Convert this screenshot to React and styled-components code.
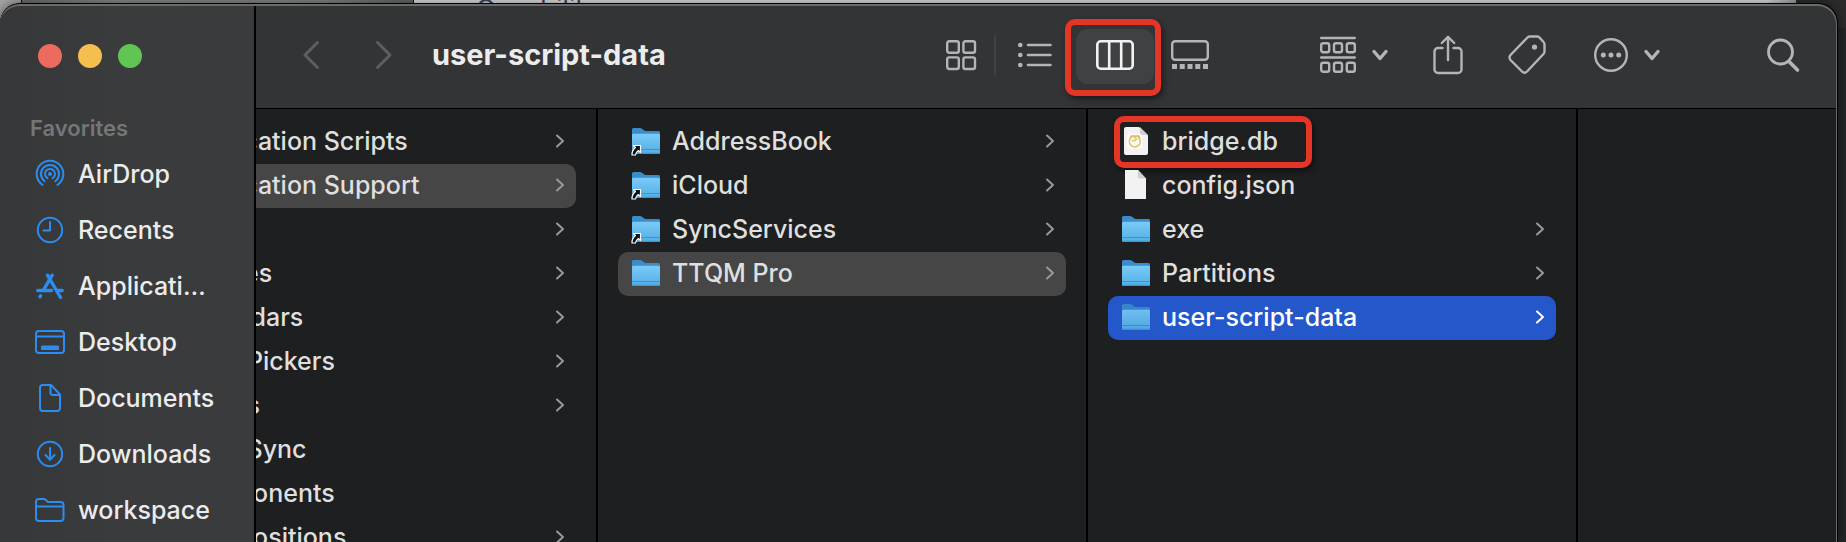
import React from "react";
import styled, { createGlobalStyle, css } from "styled-components";

const Global = createGlobalStyle`
  * { box-sizing: border-box; }
  html, body, #root { height: 100%; }
  body {
    margin: 0;
    overflow: hidden;
    background: #242526;
    font-family: Inter, "Liberation Sans", sans-serif;
  }
  button { border: 0; background: none; padding: 0; margin: 0; font: inherit; color: inherit; }
  svg { display: block; flex: none; overflow: visible; }
`;

const Page = styled.div`
  height: 100%;
  display: flex;
  flex-direction: column;
`;

const Backdrop = styled.div`
  flex: none;
  height: 28px;
  margin-bottom: -25px;
  display: flex;
  background: #2c2c2c;
`;

const BackdropLeft = styled.div`
  flex: none;
  width: 414px;
  background: linear-gradient(90deg, #a5a3a4 21px, #111 21px, #111 22px, #6e6e6e 22px, #8b8b8b 120px, #868686 320px, #666 413px, #111 413px);
`;

const BackdropSheet = styled.div`
  flex: 1;
  height: 28px;
  margin-right: 50px;
  padding-left: 62px;
  background: linear-gradient(90deg, #e0e1e4 calc(100% - 30px), #a0a0a0);
  color: #44465a;
  font-size: 26px;
  line-height: 18px;
`;

const Window = styled.main`
  position: relative;
  flex: 1;
  min-height: 0;
  margin-right: 8px;
  display: flex;
  overflow: hidden;
  border: solid #000;
  border-width: 1px 1px 0 0;
  border-radius: 20px 20px 0 0;
  background: #1e1f21;
  box-shadow: 0 0 12px rgba(0, 0, 0, 0.5);
  &::after {
    content: "";
    position: absolute;
    inset: 0;
    border: solid #6a6c6c;
    border-width: 2px 1px 0 0;
    border-radius: 20px 20px 0 0;
    pointer-events: none;
  }
`;

const Sidebar = styled.nav`
  flex: none;
  width: 256px;
  border-right: 2px solid #000;
  background: linear-gradient(90deg, #363738, #3a3b3c 110px);
`;

const Lights = styled.div`
  display: flex;
  gap: 16px;
  padding: 40px 0 0 38px;
`;

const Light = styled.button`
  width: 24px;
  height: 24px;
  border-radius: 50%;
  background: ${(p) => p.$color};
`;

const SectionTitle = styled.h2`
  margin: 48px 0 6px 30px;
  color: #757677;
  font-size: 22px;
  line-height: 24px;
  font-weight: 600;
`;

const SidebarLink = styled.a`
  display: flex;
  align-items: center;
  gap: 13px;
  height: 56px;
  padding: 0 36px 0 35px;
  color: #ececec;
  font-size: 25px;
  line-height: 32px;
  font-weight: 500;
  text-decoration: none;
  svg { color: #2b8df0; }
`;

const Label = styled.span`
  overflow: hidden;
  white-space: nowrap;
  text-overflow: ellipsis;
`;

const Main = styled.div`
  flex: 1;
  min-width: 0;
  display: flex;
  flex-direction: column;
`;

const Toolbar = styled.header`
  flex: none;
  display: flex;
  align-items: center;
  height: 105px;
  padding: 0 38px 2px 47px;
  border-bottom: 1px solid #000;
  background: #333436;
  color: #b4b5b6;
`;

const NavButtons = styled.div`
  display: flex;
  gap: 57px;
  color: #5d5e5f;
`;

const Title = styled.h1`
  margin: 0 0 0 40px;
  color: #ececec;
  font-size: 29px;
  line-height: 36px;
  font-weight: 700;
  white-space: nowrap;
`;

const Views = styled.div`
  display: flex;
  align-items: center;
  margin-left: auto;
`;

const Divider = styled.span`
  width: 2px;
  height: 40px;
  margin: 0 22px 0 18px;
  background: #404143;
`;

const marked = css`
  border: 6px solid #e63427;
  border-radius: 10px;
  box-shadow: 2px 3px 6px rgba(0, 0, 0, 0.5);
`;

const ActiveFrame = styled.div`
  ${marked}
  padding: 4px 1px 6px 5px;
  margin: 5px 10px 0 13px;
`;

const ActiveView = styled.button`
  display: grid;
  place-items: center;
  width: 78px;
  height: 55px;
  padding-bottom: 3px;
  border-radius: 12px;
  background: #404143;
  color: #f2f2f2;
`;

const Actions = styled.div`
  display: flex;
  align-items: center;
  margin-left: 111px;
`;

const Action = styled.button`
  display: flex;
  align-items: center;
  gap: 16px;
  margin-right: ${(p) => p.$after}px;
`;

const Columns = styled.div`
  flex: 1;
  min-height: 0;
  display: flex;
  overflow: hidden;
`;

const ColumnClip = styled.div`
  flex: none;
  width: ${(p) => (p.$partial ? 342 : 490)}px;
  display: flex;
  justify-content: flex-end;
  overflow: hidden;
  border-right: 2px solid #000;
`;

const Column = styled.ul`
  flex: none;
  width: 488px;
  margin: 0;
  padding: 11px 20px 0;
  list-style: none;
`;

const Row = styled.button`
  display: flex;
  align-items: center;
  gap: 12px;
  width: 100%;
  height: 44px;
  padding: 0 12px 2px 14px;
  border-radius: 10px;
  background: ${(p) => ({ active: "#2457c9", path: "#464646" })[p.$state] || "none"};
  color: ${(p) => (p.$state === "active" ? "#fff" : "#dfdfdf")};
  font-size: 25px;
  line-height: 32px;
  font-weight: 500;
  text-align: left;
  > svg:last-child { margin-left: auto; color: ${(p) => (p.$state === "active" ? "#fff" : "#98999a")}; }
`;

const Item = styled.li`
  position: relative;
`;

const Mark = styled.span`
  ${marked}
  position: absolute;
  top: -4px;
  left: 6px;
  width: 198px;
  height: 52px;
  pointer-events: none;
`;

const Line = ({ w, h, sw = 2, children }) => (
  <svg width={w} height={h} viewBox={`0 0 ${w} ${h}`} fill="none" stroke="currentColor" strokeWidth={sw} strokeLinecap="round" strokeLinejoin="round" aria-hidden="true">
    {children}
  </svg>
);

const sideIcons = {
  AirDrop: (
    <Line w={30} h={30}>
      <circle cx="15" cy="15" r="2" fill="currentColor" stroke="none" />
      <path d="M12.4 19.2a5 5 0 1 1 5.2 0M9.7 22.2a9 9 0 1 1 10.6 0M7.6 26a13.3 13.3 0 1 1 14.8 0" />
    </Line>
  ),
  Recents: (
    <Line w={30} h={30}>
      <circle cx="15" cy="15" r="12.2" />
      <path d="M15 7v8.5H8.5" />
    </Line>
  ),
  Applications: (
    <Line w={30} h={30} sw={3.4}>
      <path d="M12.5 4.2l13 22.3M17.2 4.2L9 18.2M5 25.8l.6-1M2.7 19.5h13.8M22 19.5h5.2" />
    </Line>
  ),
  Desktop: (
    <Line w={30} h={30}>
      <rect x="1" y="4" width="28" height="22" rx="3" />
      <path d="M1.5 9.5h27" strokeWidth="1.8" />
      <rect x="6" y="18.5" width="18" height="4.5" rx="1" fill="currentColor" stroke="none" />
    </Line>
  ),
  Documents: (
    <Line w={30} h={30}>
      <path d="M16 2H8a3 3 0 0 0-3 3v20a3 3 0 0 0 3 3h14a3 3 0 0 0 3-3V11.5zM15.5 2.2V9.5a2.5 2.5 0 0 0 2.5 2.5H25" />
    </Line>
  ),
  Downloads: (
    <Line w={30} h={30}>
      <circle cx="15" cy="15" r="12.2" />
      <path d="M15 9v11.5M10.5 16l4.5 4.7 4.5-4.7" />
    </Line>
  ),
  workspace: (
    <Line w={30} h={30}>
      <path d="M1 23V7a3 3 0 0 1 3-3h5.5l3.5 3h12.5a3 3 0 0 1 3 3v13a3 3 0 0 1-3 3H4a3 3 0 0 1-3-3zM1 11.5h27.5" />
    </Line>
  ),
};

const DownChevron = () => (
  <Line w={16} h={12} sw={3.4}><path d="M2 2.5l6 7 6-7" /></Line>
);

const Folder = ({ alias, dim }) => (
  <svg width="28" height="28" viewBox="0 0 28 28" aria-hidden="true">
    <defs>
      <linearGradient id="folderFront" x1="0" y1="0" x2="0" y2="1">
        <stop offset="0" stopColor="#7acbf8" />
        <stop offset="1" stopColor="#53ade5" />
      </linearGradient>
    </defs>
    <g opacity={dim ? 0.9 : 1}>
      <path d="M0 2.5Q0 1 1.5 1H8q1.2 0 2 .7L12 3.3q.8.7 2 .7h12.5q1.5 0 1.5 1.5V12H0z" fill="#3a8ccb" />
      <path d="M0 8Q0 6.7 1.5 6.7h25Q28 6.7 28 8v17.5q0 1.5-1.5 1.5h-25Q0 27 0 25.5z" fill="url(#folderFront)" />
      <path d="M0 22.5h28M.5 26.3h27" stroke="#3f93cc" strokeWidth="1" />
    </g>
    {alias && (
      <path d="M1.500 18.500h7v7l-2.200-2q-2.500 1.800-2.800 4.500H0q-.3-4.500 3.500-7.500z" fill="#111" stroke="#fff" strokeWidth="1.2" strokeLinejoin="round" />
    )}
  </svg>
);

const Paper = ({ badge }) => (
  <svg width="28" height="30" viewBox="0 0 28 30" aria-hidden="true">
    <path d={badge ? "M4 1h13l9 8.5V27q0 2-2 2H4q-2 0-2-2V3q0-2 2-2z" : "M3 0h13l8 8.5V29H3z"} fill="#f2f2f2" />
    <path d={badge ? "M18 1v5.5q0 2.5 2.5 2.5H26z" : "M16 0v6.5q0 2 2 2h6z"} fill="#cfcfcf" />
    {badge && (
      <g>
        <rect x="5" y="7.5" width="15" height="15" rx="3.5" fill="#fdfdfb" />
        <g fill="none" stroke="#e3c069" strokeWidth="1.5">
          <circle cx="12.8" cy="15.500" r="5.500" />
          <path d="M8.500 13q-.5-3 1.800-3.200t2.500 2.700q.5-3 3-2.800t1.500 3.300M9.500 14.500q3.500 1 5.500-2" />
        </g>
      </g>
    )}
  </svg>
);

const RowChevron = () => (
  <Line w={8} h={14}><path d="M1 1.500l6 5.500-6 5.500" /></Line>
);

const library = [
  ["Application Scripts", 1],
  ["Application Support", 1, "path"],
  ["Audio", 1],
  ["Caches", 1],
  ["Calendars", 1],
  ["ColorPickers", 1],
  ["Colors", 1],
  ["ColorSync", 0],
  ["Components", 0],
  ["Compositions", 1],
].map(([name, open, state]) => ({ name, open, state, kind: "folder" }));

const support = [
  { name: "AddressBook", kind: "alias", open: 1 },
  { name: "iCloud", kind: "alias", open: 1 },
  { name: "SyncServices", kind: "alias", open: 1 },
  { name: "TTQM Pro", kind: "folder", open: 1, state: "path" },
];

const project = [
  { name: "bridge.db", kind: "database", marked: true },
  { name: "config.json", kind: "paper" },
  { name: "exe", kind: "folder", open: 1 },
  { name: "Partitions", kind: "folder", open: 1 },
  { name: "user-script-data", kind: "folder", open: 1, state: "active" },
];

const FileIcon = ({ kind, dim }) =>
  kind === "paper" || kind === "database" ? <Paper badge={kind === "database"} /> : <Folder alias={kind === "alias"} dim={dim} />;

const FileColumn = ({ items, partial }) => (
  <ColumnClip $partial={partial}>
    <Column>
      {items.map((f) => (
        <Item key={f.name}>
          <Row $state={f.state}>
            <FileIcon kind={f.kind} dim={f.state === "active"} />
            <Label>{f.name}</Label>
            {f.open ? <RowChevron /> : null}
          </Row>
          {f.marked && <Mark />}
        </Item>
      ))}
    </Column>
  </ColumnClip>
);

export default function App() {
  return (
    <Page>
      <Global />
      <Backdrop>
        <BackdropLeft />
        <BackdropSheet>Capability</BackdropSheet>
      </Backdrop>
      <Window>
        <Sidebar>
          <Lights>
            <Light $color="#ed6a5f" aria-label="Close" />
            <Light $color="#f5bf4f" aria-label="Minimize" />
            <Light $color="#61c554" aria-label="Zoom" />
          </Lights>
          <SectionTitle>Favorites</SectionTitle>
          {Object.keys(sideIcons).map((name) => (
            <SidebarLink key={name} href="#">
              {sideIcons[name]}
              <Label>{name}</Label>
            </SidebarLink>
          ))}
        </Sidebar>
        <Main>
          <Toolbar>
            <NavButtons>
              <button aria-label="Back"><Line w={16} h={28} sw={3}><path d="M14.5 1.5L2 14l12.5 12.5" /></Line></button>
              <button aria-label="Forward"><Line w={16} h={28} sw={3}><path d="M1.5 1.5L14 14 1.5 26.5" /></Line></button>
            </NavButtons>
            <Title>user-script-data</Title>
            <Views>
              <button aria-label="Icons">
                <Line w={30} h={30} sw={2.4}>
                  <rect x="1.2" y="1.2" width="11.6" height="11.6" rx="2" />
                  <rect x="17.4" y="1.2" width="11.6" height="11.6" rx="2" />
                  <rect x="1.2" y="17.4" width="11.6" height="11.6" rx="2" />
                  <rect x="17.4" y="17.4" width="11.6" height="11.6" rx="2" />
                </Line>
              </button>
              <Divider />
              <button aria-label="List">
                <Line w={34} h={26} sw={2.6}>
                  <path d="M10 3h22.5M10 13h22.5M10 23h22.5" />
                  <g fill="currentColor" stroke="none"><circle cx="2.3" cy="3" r="2.3" /><circle cx="2.3" cy="13" r="2.3" /><circle cx="2.3" cy="23" r="2.3" /></g>
                </Line>
              </button>
              <ActiveFrame>
                <ActiveView aria-label="Columns">
                  <Line w={38} h={30} sw={2.6}>
                    <rect x="1.3" y="1.3" width="35.4" height="27.4" rx="3.5" />
                    <path d="M13.2 2v26M25.2 2v26" />
                  </Line>
                </ActiveView>
              </ActiveFrame>
              <button aria-label="Gallery">
                <Line w={38} h={30} sw={2.4}>
                  <rect x="1.2" y="1.2" width="35.6" height="18.6" rx="3" />
                  <path d="M1 26.5h36" strokeWidth="5" strokeLinecap="butt" strokeDasharray="5 2.75" />
                </Line>
              </button>
            </Views>
            <Actions>
              <Action $after={45} aria-label="Group">
                <Line w={36} h={38} sw={2.4}>
                  <path d="M1.2 2h33.6M1.2 21.500h33.6" />
                  <rect x="1.2" y="7.2" width="8" height="9" rx="2" /><rect x="14" y="7.2" width="8" height="9" rx="2" /><rect x="26.8" y="7.2" width="8" height="9" rx="2" />
                  <rect x="1.2" y="26.700" width="8" height="9" rx="2" /><rect x="14" y="26.700" width="8" height="9" rx="2" /><rect x="26.8" y="26.700" width="8" height="9" rx="2" />
                </Line>
                <DownChevron />
              </Action>
              <Action $after={45} aria-label="Share">
                <Line w={30} h={42} sw={2.4}>
                  <path d="M9.500 14H5A3.500 3.500 0 0 0 1.500 17.500v18A3.500 3.500 0 0 0 5 39h20a3.500 3.500 0 0 0 3.500-3.500v-18A3.500 3.500 0 0 0 25 14h-4.500M15 26V3M8.800 9L15 2.800 21.200 9" />
                </Line>
              </Action>
              <Action $after={48} aria-label="Tags">
                <Line w={38} h={40} sw={2.4}>
                  <path d="M19.5 2.5q1-1 2.5-1h7q1.500 0 2.5 1l4 4.500q1 1 1 2.500v7q0 1.500-1 2.500L19 36.500q-2.500 2.500-5 0L2.500 25q-2-2.500 0-5z" />
                  <circle cx="26.5" cy="12" r="2.6" fill="currentColor" stroke="none" />
                </Line>
              </Action>
              <Action $after={107} aria-label="More">
                <Line w={34} h={34} sw={2.4}>
                  <circle cx="17" cy="17" r="15.8" />
                  <g fill="currentColor" stroke="none"><circle cx="9.3" cy="17" r="2.5" /><circle cx="17" cy="17" r="2.5" /><circle cx="24.7" cy="17" r="2.5" /></g>
                </Line>
                <DownChevron />
              </Action>
              <Action $after={0} aria-label="Search">
                <Line w={32} h={34} sw={2.8}>
                  <circle cx="13.5" cy="14" r="12" />
                  <path d="M22 23.500l8.500 8.500" strokeWidth="3.6" />
                </Line>
              </Action>
            </Actions>
          </Toolbar>
          <Columns>
            <FileColumn items={library} partial />
            <FileColumn items={support} />
            <FileColumn items={project} />
          </Columns>
        </Main>
      </Window>
    </Page>
  );
}
